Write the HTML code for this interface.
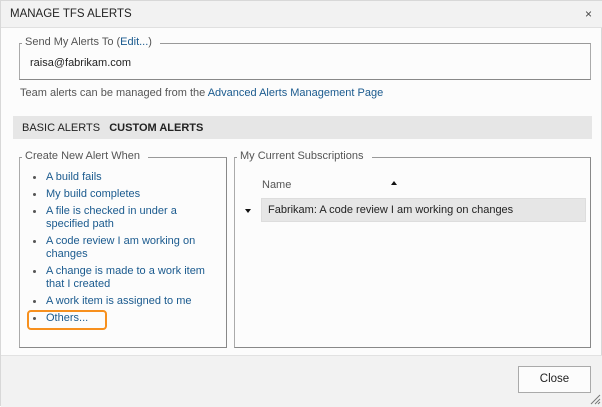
<!DOCTYPE html>
<html><head><style>
*{margin:0;padding:0;box-sizing:border-box}
body{width:602px;height:406px;background:#fcfcfc;font-family:"Liberation Sans",sans-serif;font-size:11px;color:#222;position:relative;overflow:hidden;border:1px solid #d8d8d8}
.a{position:absolute;white-space:nowrap}
.lk{color:#1a5a8e}
.fs{position:absolute;border:1px solid #888;border-top-color:#999;border-left-color:#aaa}
.lg{position:absolute;background:#fcfcfc;padding:0 8px 0 3px;color:#555;top:-8px;left:2px}
</style></head><body>
<div class="a" style="left:0;top:0;width:602px;height:27px;background:#f2f2f2;border-bottom:1px solid #e0e0e0"></div>
<div class="a" style="left:9px;top:7px;font-size:11.5px;color:#222">MANAGE TFS ALERTS</div>
<div class="a" style="left:584px;top:6px;font-size:12px;color:#444">×</div>

<div class="fs" style="left:18px;top:42px;width:572px;height:37px;border-right-color:#aaa">
<div class="lg">Send My Alerts To (<span class="lk">Edit...</span>)</div>
<div class="a" style="left:10px;top:13px">raisa@fabrikam.com</div>
</div>
<div class="a" style="left:19px;top:86px;color:#555">Team alerts can be managed from the <span class="lk">Advanced Alerts Management Page</span></div>

<div class="a" style="left:12px;top:115px;width:579px;height:23px;background:#e6e6e6"></div>
<div class="a" style="left:21px;top:121px">BASIC ALERTS &nbsp;&nbsp;<b>CUSTOM ALERTS</b></div>

<div class="fs" style="left:18px;top:156px;width:208px;height:191px">
<div class="lg">Create New Alert When</div>
</div>
<div class="a lk" style="left:45px;top:170px;line-height:13px">A build fails</div>
<div class="a lk" style="left:45px;top:187px;line-height:13px">My build completes</div>
<div class="a lk" style="left:45px;top:204px;line-height:13px">A file is checked in under a<br>specified path</div>
<div class="a lk" style="left:45px;top:234px;line-height:13px">A code review I am working on<br>changes</div>
<div class="a lk" style="left:45px;top:264px;line-height:13px">A change is made to a work item<br>that I created</div>
<div class="a lk" style="left:45px;top:294px;line-height:13px">A work item is assigned to me</div>
<div class="a lk" style="left:45px;top:311px;line-height:13px">Others...</div>
<div class="a" style="left:26px;top:309px;width:80px;height:20px;border:2px solid #f7901e;border-radius:4px"></div>
<div class="a" style="left:32px;top:175px;width:3px;height:3px;border-radius:50%;background:#555;box-shadow:0 17px 0 #555,0 34px 0 #555,0 64px 0 #555,0 94px 0 #555,0 124px 0 #555,0 141px 0 #555"></div>

<div class="fs" style="left:233px;top:156px;width:357px;height:191px">
<div class="lg">My Current Subscriptions</div>
</div>
<div class="a" style="left:261px;top:178px;color:#555">Name</div>
<div class="a" style="left:390px;top:180px;width:0;height:0;border-left:3px solid transparent;border-right:3px solid transparent;border-bottom:4px solid #111"></div>
<div class="a" style="left:244px;top:208px;width:0;height:0;border-left:3px solid transparent;border-right:3px solid transparent;border-top:4px solid #111"></div>
<div class="a" style="left:260px;top:197px;width:325px;height:24px;background:#e6e6e6;border:1px solid #ddd"></div>
<div class="a" style="left:267px;top:203px">Fabrikam: A code review I am working on changes</div>

<div class="a" style="left:0;top:354px;width:602px;height:52px;background:#f2f2f2;border-top:1px solid #e2e2e2"></div>
<div class="a" style="left:517px;top:365px;width:73px;height:27px;border:1px solid #aaa;background:#fcfcfc;text-align:center;line-height:25px;font-size:11.5px">Close</div>
<svg class="a" style="left:589px;top:393px" width="11" height="11"><path d="M1 10L10 1M5 10L10 5M8 10L10 8" stroke="#777" stroke-width="1"/></svg>
</body></html>
